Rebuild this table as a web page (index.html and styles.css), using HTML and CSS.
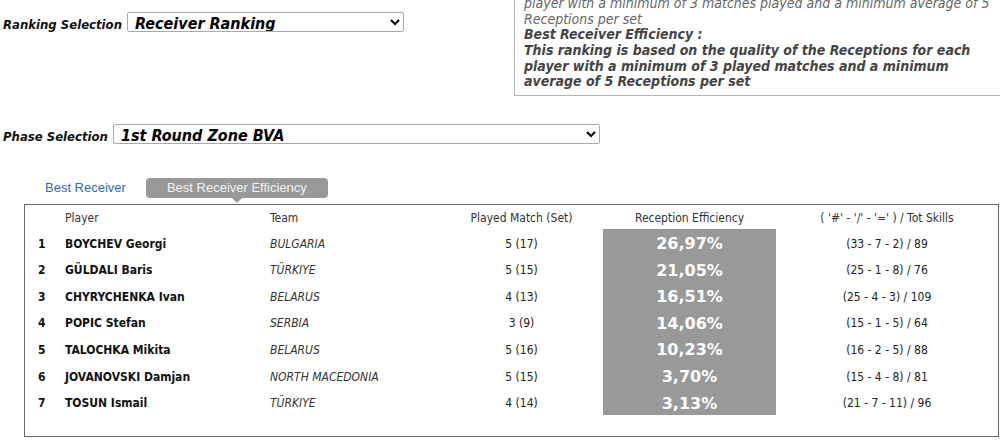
FILE: index.html
```html
<!DOCTYPE html>
<html>
<head>
<meta charset="utf-8">
<link rel="stylesheet" href="styles.css">
</head>
<body>
<div class="top">
  <div class="sel-block">
    <label class="sel-label">Ranking Selection</label>
    <select class="sel sel-ranking"><option>Receiver Ranking</option></select>
  </div>
  <div class="info">
    <div class="info-line b">Best Receiver :</div>
    <div class="info-line">This ranking is based on the number of Perfect Receptions for each</div>
    <div class="info-line">player with a minimum of 3 matches played and a minimum average of 5</div>
    <div class="info-line">Receptions per set</div>
    <div class="info-line b">Best Receiver Efficiency :</div>
    <div class="info-line b">This ranking is based on the quality of the Receptions for each</div>
    <div class="info-line b">player with a minimum of 3 played matches and a minimum</div>
    <div class="info-line b">average of 5 Receptions per set</div>
  </div>
</div>

<div class="phase">
  <label class="sel-label">Phase Selection</label>
  <select class="sel sel-phase"><option>1st Round Zone BVA</option></select>
</div>

<div class="tabs">
  <span class="tab">Best Receiver</span>
  <span class="tab tab-active">Best Receiver Efficiency</span>
</div>

<div class="board">
  <table class="rank">
    <colgroup>
      <col class="c-pos"><col class="c-player"><col class="c-team"><col class="c-played"><col class="c-eff"><col class="c-tot">
    </colgroup>
    <thead>
      <tr>
        <th></th>
        <th class="l">Player</th>
        <th class="l">Team</th>
        <th>Played Match (Set)</th>
        <th>Reception Efficiency</th>
        <th>( '#' - '/' - '=' ) / Tot Skills</th>
      </tr>
    </thead>
    <tbody>
      <tr><td class="pos">1</td><td class="name">BOYCHEV Georgi</td><td class="team">BULGARIA</td><td class="c">5 (17)</td><td class="eff">26,97%</td><td class="c">(33 - 7 - 2) / 89</td></tr>
      <tr><td class="pos">2</td><td class="name">GÜLDALI Baris</td><td class="team">TÜRKIYE</td><td class="c">5 (15)</td><td class="eff">21,05%</td><td class="c">(25 - 1 - 8) / 76</td></tr>
      <tr><td class="pos">3</td><td class="name">CHYRYCHENKA Ivan</td><td class="team">BELARUS</td><td class="c">4 (13)</td><td class="eff">16,51%</td><td class="c">(25 - 4 - 3) / 109</td></tr>
      <tr><td class="pos">4</td><td class="name">POPIC Stefan</td><td class="team">SERBIA</td><td class="c">3 (9)</td><td class="eff">14,06%</td><td class="c">(15 - 1 - 5) / 64</td></tr>
      <tr><td class="pos">5</td><td class="name">TALOCHKA Mikita</td><td class="team">BELARUS</td><td class="c">5 (16)</td><td class="eff">10,23%</td><td class="c">(16 - 2 - 5) / 88</td></tr>
      <tr><td class="pos">6</td><td class="name">JOVANOVSKI Damjan</td><td class="team">NORTH MACEDONIA</td><td class="c">5 (15)</td><td class="eff">3,70%</td><td class="c">(15 - 4 - 8) / 81</td></tr>
      <tr><td class="pos">7</td><td class="name">TOSUN Ismail</td><td class="team">TÜRKIYE</td><td class="c">4 (14)</td><td class="eff">3,13%</td><td class="c">(21 - 7 - 11) / 96</td></tr>
    </tbody>
  </table>
</div>
</body>
</html>
```

FILE: styles.css
```css
html, body {
  margin: 0;
  padding: 0;
  background: #fff;
  overflow: hidden;
  width: 1000px;
  height: 448px;
}
body {
  font-family: "DejaVu Sans Condensed", "DejaVu Sans", sans-serif;
  font-stretch: condensed;
  color: #000;
}
.top {
  display: flex;
  align-items: flex-start;
  padding-left: 3px;
}
.sel-block {
  flex: 0 0 511px;
  padding-top: 12px;
  display: flex;
  align-items: baseline;
}
.sel-label {
  font-size: 13px;
  font-weight: bold;
  font-style: italic;
  color: #111;
  margin-right: 5px;
  white-space: nowrap;
}
.sel {
  font-family: "DejaVu Sans Condensed", "DejaVu Sans", sans-serif;
  font-stretch: condensed;
  font-size: 16px;
  font-weight: bold;
  font-style: italic;
  color: #000;
  height: 20px;
  padding: 0 0 0 3px;
  border: 1px solid #a9a9a9;
  border-radius: 2px;
  background: #fff;
  box-sizing: border-box;
}
.sel-ranking { width: 277px; }
.sel-phase { width: 487px; }
.info {
  flex: 0 0 530px;
  margin-top: -41px;
  border: 1px solid #b4b4b4;
  padding: 5px 10px 5px 9px;
  box-sizing: border-box;
  font-size: 14px;
  font-style: italic;
  color: #666;
}
.info-line {
  line-height: 15.6px;
  white-space: nowrap;
}
.info-line.b {
  font-weight: bold;
  color: #444;
}
.phase {
  display: flex;
  align-items: baseline;
  padding-left: 3px;
  margin-top: 28px;
}
.tabs {
  display: flex;
  align-items: center;
  margin-top: 34px;
  padding-left: 45px;
  height: 20px;
  font-family: "Liberation Sans", Arial, sans-serif;
  font-stretch: normal;
  font-size: 13px;
}
.tab {
  color: #2e6bc0;
  margin-right: 20px;
  white-space: nowrap;
}
.tab-active {
  position: relative;
  background: #999;
  color: #f2f2f2;
  border-radius: 4px;
  height: 20px;
  line-height: 20px;
  padding: 0 21px;
  margin-right: 0;
}
.tab-active::after {
  content: "";
  position: absolute;
  left: 50%;
  bottom: -5px;
  margin-left: -5px;
  border-left: 5px solid transparent;
  border-right: 5px solid transparent;
  border-top: 5px solid #999;
}
.board {
  margin-top: 6px;
  margin-left: 24px;
  width: 975px;
  height: 233px;
  box-sizing: border-box;
  border: 1px solid #666;
}
.rank {
  border-collapse: collapse;
  table-layout: fixed;
  width: 973px;
  font-size: 12px;
}
.c-pos { width: 40px; }
.c-player { width: 205px; }
.c-team { width: 170px; }
.c-played { width: 163px; }
.c-eff { width: 173px; }
.c-tot { width: 222px; }
.rank th {
  font-weight: normal;
  color: #333;
  height: 24px;
  padding: 2px 0 0 0;
  box-sizing: border-box;
  text-align: center;
  white-space: nowrap;
}
.rank th.l { text-align: left; }
.rank td {
  height: 26.6px;
  padding: 3px 0 0 0;
  box-sizing: border-box;
  white-space: nowrap;
  color: #111;
}
.rank td.pos {
  font-weight: bold;
  padding-left: 13px;
}
.rank td.name { font-weight: bold; }
.rank td.team { font-style: italic; color: #333; }
.rank td.c { text-align: center; color: #222; }
.rank td.eff {
  background: #999;
  color: #fff;
  font-weight: bold;
  font-size: 16px;
  font-stretch: normal;
  font-family: "DejaVu Sans", sans-serif;
  text-align: center;
}
```
